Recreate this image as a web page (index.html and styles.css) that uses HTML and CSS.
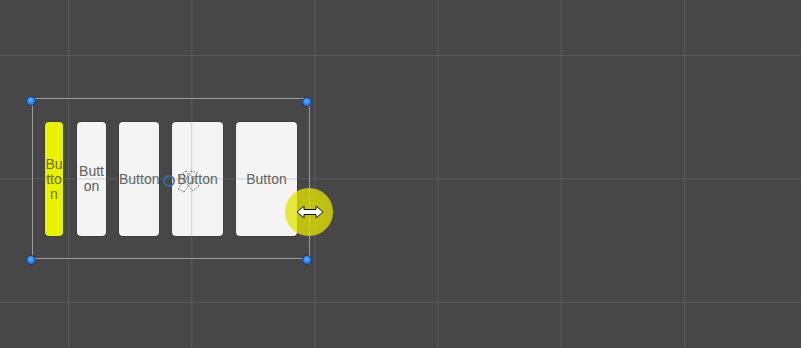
FILE: index.html
```html
<!DOCTYPE html>
<html>
<head>
<meta charset="utf-8">
<link rel="stylesheet" href="styles.css">
</head>
<body>
<div class="scene">
  <div class="rect">
    <div class="btn btn-yellow">Button</div>
    <div class="btn btn-w29">Button</div>
    <div class="btn btn-w40 nowrap">Button</div>
    <div class="btn btn-w51">Button</div>
    <div class="btn btn-w61">Button</div>
  </div>
  <div class="grid"></div>
  <span class="handle h-tl"></span>
  <span class="handle h-tr"></span>
  <span class="handle h-bl"></span>
  <span class="handle h-br"></span>
  <span class="pivot"></span>
  <svg class="rotate" width="30" height="26" viewBox="0 0 30 26">
    <g stroke="#707070" stroke-width="0.9" fill="none" stroke-dasharray="1.6 1">
      <path d="M4 21 L17 3"/>
      <path d="M10 24 L24 5"/>
      <path d="M12 3 L25 18"/>
      <path d="M6 8 L19 23"/>
      <path d="M17 3 L24 5 M4 21 L10 24 M12 3 L6 8 M25 18 L19 23"/>
    </g>
  </svg>
  <span class="glow"></span>
  <svg class="cursor" width="28" height="14" viewBox="0 0 28 14">
    <path d="M1 7 L8 1 L8 4.5 L20 4.5 L20 1 L27 7 L20 13 L20 9.5 L8 9.5 L8 13 Z" fill="#fff" stroke="#111" stroke-width="1" stroke-linejoin="miter"/>
  </svg>
</div>
</body>
</html>
```
FILE: styles.css
```css
html, body {
  margin: 0;
  padding: 0;
}
body {
  background: #474747;
  font-family: "Liberation Sans", Arial, sans-serif;
}
.scene {
  position: relative;
  width: 801px;
  height: 348px;
  overflow: hidden;
  background: #474747;
}
.grid {
  position: absolute;
  left: 0;
  top: 0;
  width: 801px;
  height: 348px;
  pointer-events: none;
  background-image:
    linear-gradient(to right, rgba(128,128,128,0.32) 1px, transparent 1px),
    linear-gradient(to bottom, rgba(128,128,128,0.32) 1px, transparent 1px);
  background-size: 123.2px 123.4px;
  background-position: 68px 55px;
}
.rect {
  position: absolute;
  left: 32px;
  top: 98px;
  width: 278px;
  height: 161px;
  box-sizing: border-box;
  border: 1px solid #9b9b9b;
  padding: 23px 0 22px 12px;
  display: flex;
  gap: 13px;
}
.btn {
  background: #f4f4f4;
  border-radius: 4px;
  box-shadow: 0 0 0 0.5px rgba(0,0,0,0.25);
  display: flex;
  align-items: center;
  justify-content: center;
  text-align: center;
  font-size: 14px;
  line-height: 15px;
  color: #606060;
  overflow: hidden;
  word-break: break-all;
  flex: none;
}
.btn-yellow {
  width: 18px;
  margin-right: 1px;
  background: #e8f200;
  color: #6e6e08;
}
.btn-w29 { width: 29px; }
.btn-w40 { width: 40px; }
.btn-w51 { width: 51px; }
.btn-w61 { width: 61px; }
.nowrap {
  white-space: nowrap;
  justify-content: flex-start;
}
.handle {
  position: absolute;
  width: 10px;
  height: 10px;
  border-radius: 50%;
  box-sizing: border-box;
  border: 1px solid #163f7a;
  background: radial-gradient(circle at 45% 40%, #6ab2ff 0%, #2f80ec 50%, #1b5cc4 100%);
}
.h-tl { left: 26px; top: 96px; }
.h-tr { left: 302px; top: 97px; }
.h-bl { left: 26px; top: 255px; }
.h-br { left: 302px; top: 255px; }
.pivot {
  position: absolute;
  left: 163px;
  top: 175px;
  width: 12px;
  height: 12px;
  box-sizing: border-box;
  border-radius: 50%;
  border: 2px solid rgba(58,108,178,0.9);
}
.rotate {
  position: absolute;
  left: 174px;
  top: 168px;
}
.glow {
  position: absolute;
  left: 285px;
  top: 188px;
  width: 48px;
  height: 48px;
  border-radius: 50%;
  background: radial-gradient(circle, rgba(228,228,0,0.78) 0%, rgba(228,228,0,0.76) 78%, rgba(228,228,0,0.35) 92%, rgba(228,228,0,0) 100%);
}
.cursor {
  position: absolute;
  left: 296px;
  top: 205px;
}
```
